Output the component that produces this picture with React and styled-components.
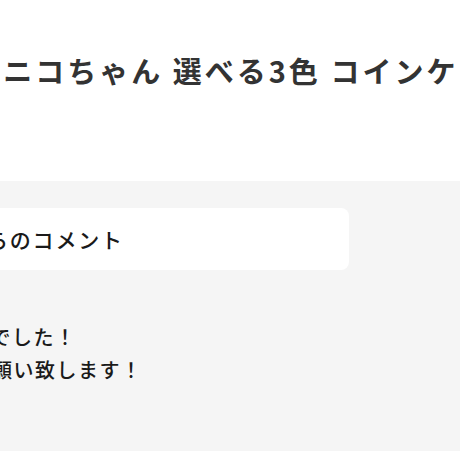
import styled, { createGlobalStyle } from "styled-components";

const GlobalStyle = createGlobalStyle`
  html, body {
    margin: 0;
    padding: 0;
    background: #fff;
  }
  body {
    font-family: "Noto Sans CJK JP", "Noto Sans", sans-serif;
    color: #333;
  }
`;

const Page = styled.div`
  width: 460px;
  height: 460px;
  overflow: hidden;
  background: #fff;
`;

const Header = styled.header`
  height: 181px;
  box-sizing: border-box;
  padding-top: 50px;
`;

const Column = styled.div`
  margin-left: -180px;
  width: 529px;
`;

const Title = styled.h1`
  margin: 0;
  font-size: 29px;
  line-height: 40px;
  font-weight: 700;
  letter-spacing: 3px;
  text-indent: -8px;
  color: #333;
  white-space: nowrap;
`;

const CommentSection = styled.section`
  background: #f5f5f5;
  padding: 27px 0 65px;
`;

const CommentHead = styled.div`
  height: 62px;
  display: flex;
  align-items: center;
  padding: 0 40px 0 53px;
  background: #fff;
  border-radius: 8px;
  font-size: 21px;
  font-weight: 500;
  letter-spacing: 1.8px;
  color: #1a1a1a;
  white-space: nowrap;
`;

const Message = styled.p`
  margin: 50px 0 0;
  font-size: 20px;
  font-weight: 500;
  line-height: 33px;
  letter-spacing: 1.5px;
  color: #1a1a1a;
  white-space: nowrap;
`;

export default function App() {
  return (
    <Page>
      <GlobalStyle />
      <Header>
        <Column>
          <Title>ゆるスマイルニコちゃん 選べる3色 コインケース</Title>
        </Column>
      </Header>
      <CommentSection>
        <Column>
          <CommentHead>ショップからのコメント</CommentHead>
          <Message>
            とても良いお取引でした！
            <br />
            どうぞよろしくお願い致します！
          </Message>
        </Column>
      </CommentSection>
    </Page>
  );
}
